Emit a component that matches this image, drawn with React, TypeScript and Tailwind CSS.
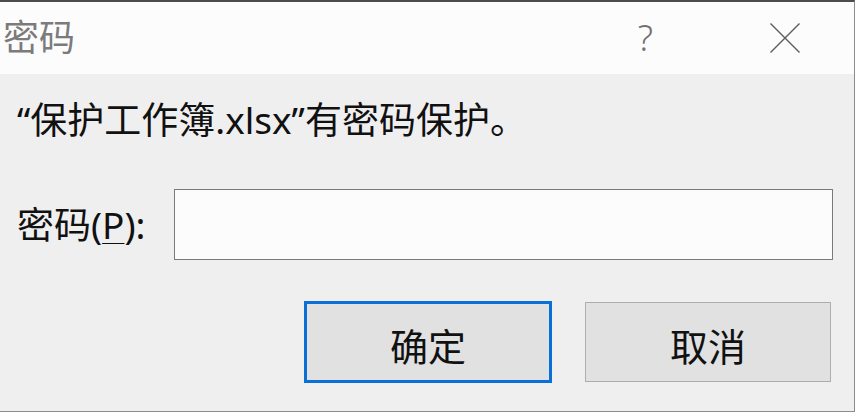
const uiFont = {
  fontFamily: '"Noto Sans", "Noto Sans CJK SC", sans-serif',
}

function CloseIcon() {
  return (
    <svg width="30" height="30" viewBox="0 0 30 30" fill="none">
      <path d="M0.5 0.5 L29.5 29.5 M29.5 0.5 L0.5 29.5" stroke="#5c5c5c" strokeWidth="1.4" />
    </svg>
  )
}

export default function App() {
  return (
    <div className="w-[860px] h-[416px] bg-white" style={uiFont}>
      <div className="w-[855px] h-[412px] flex flex-col bg-[#f0eff0] border-t-2 border-r border-b border-[#8c8c8c] border-t-[#4d4d4d]">
        {/* Title bar */}
        <div className="h-[72px] flex items-center bg-[#fdfcfd] shrink-0">
          <span className="pl-[3px] text-[36px] leading-none text-[#7b7b7b]">密码</span>
          <span className="ml-auto mr-[117px] text-[36px] font-light leading-none text-[#707070]">?</span>
          <div className="mr-[54px]">
            <CloseIcon />
          </div>
        </div>

        {/* Body */}
        <div className="flex flex-col pl-[17px]">
          <p className="mt-[27px] text-[37px] leading-[38px] text-[#111]">“保护工作簿.xlsx”有密码保护。</p>

          <div className="mt-[50px] flex items-center">
            <label className="w-[157px] text-[37px] leading-[38px] text-[#111]">
              密码(<span className="underline underline-offset-4 decoration-1">P</span>):
            </label>
            <input
              type="password"
              className="w-[659px] h-[71px] bg-[#fdfcfd] border border-[#7a7a7a] outline-none"
            />
          </div>

          <div className="mt-[41px] flex items-start">
            <button className="ml-[287px] w-[248px] h-[82px] bg-[#e1e1e1] border-[3px] border-[#0b6fd8] text-[38px] leading-none text-[#111] pt-[8px]">
              确定
            </button>
            <button className="ml-[33px] mt-[1px] w-[246px] h-[80px] bg-[#e1e1e1] border border-[#adadad] text-[38px] leading-none text-[#111] pt-[8px]">
              取消
            </button>
          </div>
        </div>
      </div>
    </div>
  )
}
